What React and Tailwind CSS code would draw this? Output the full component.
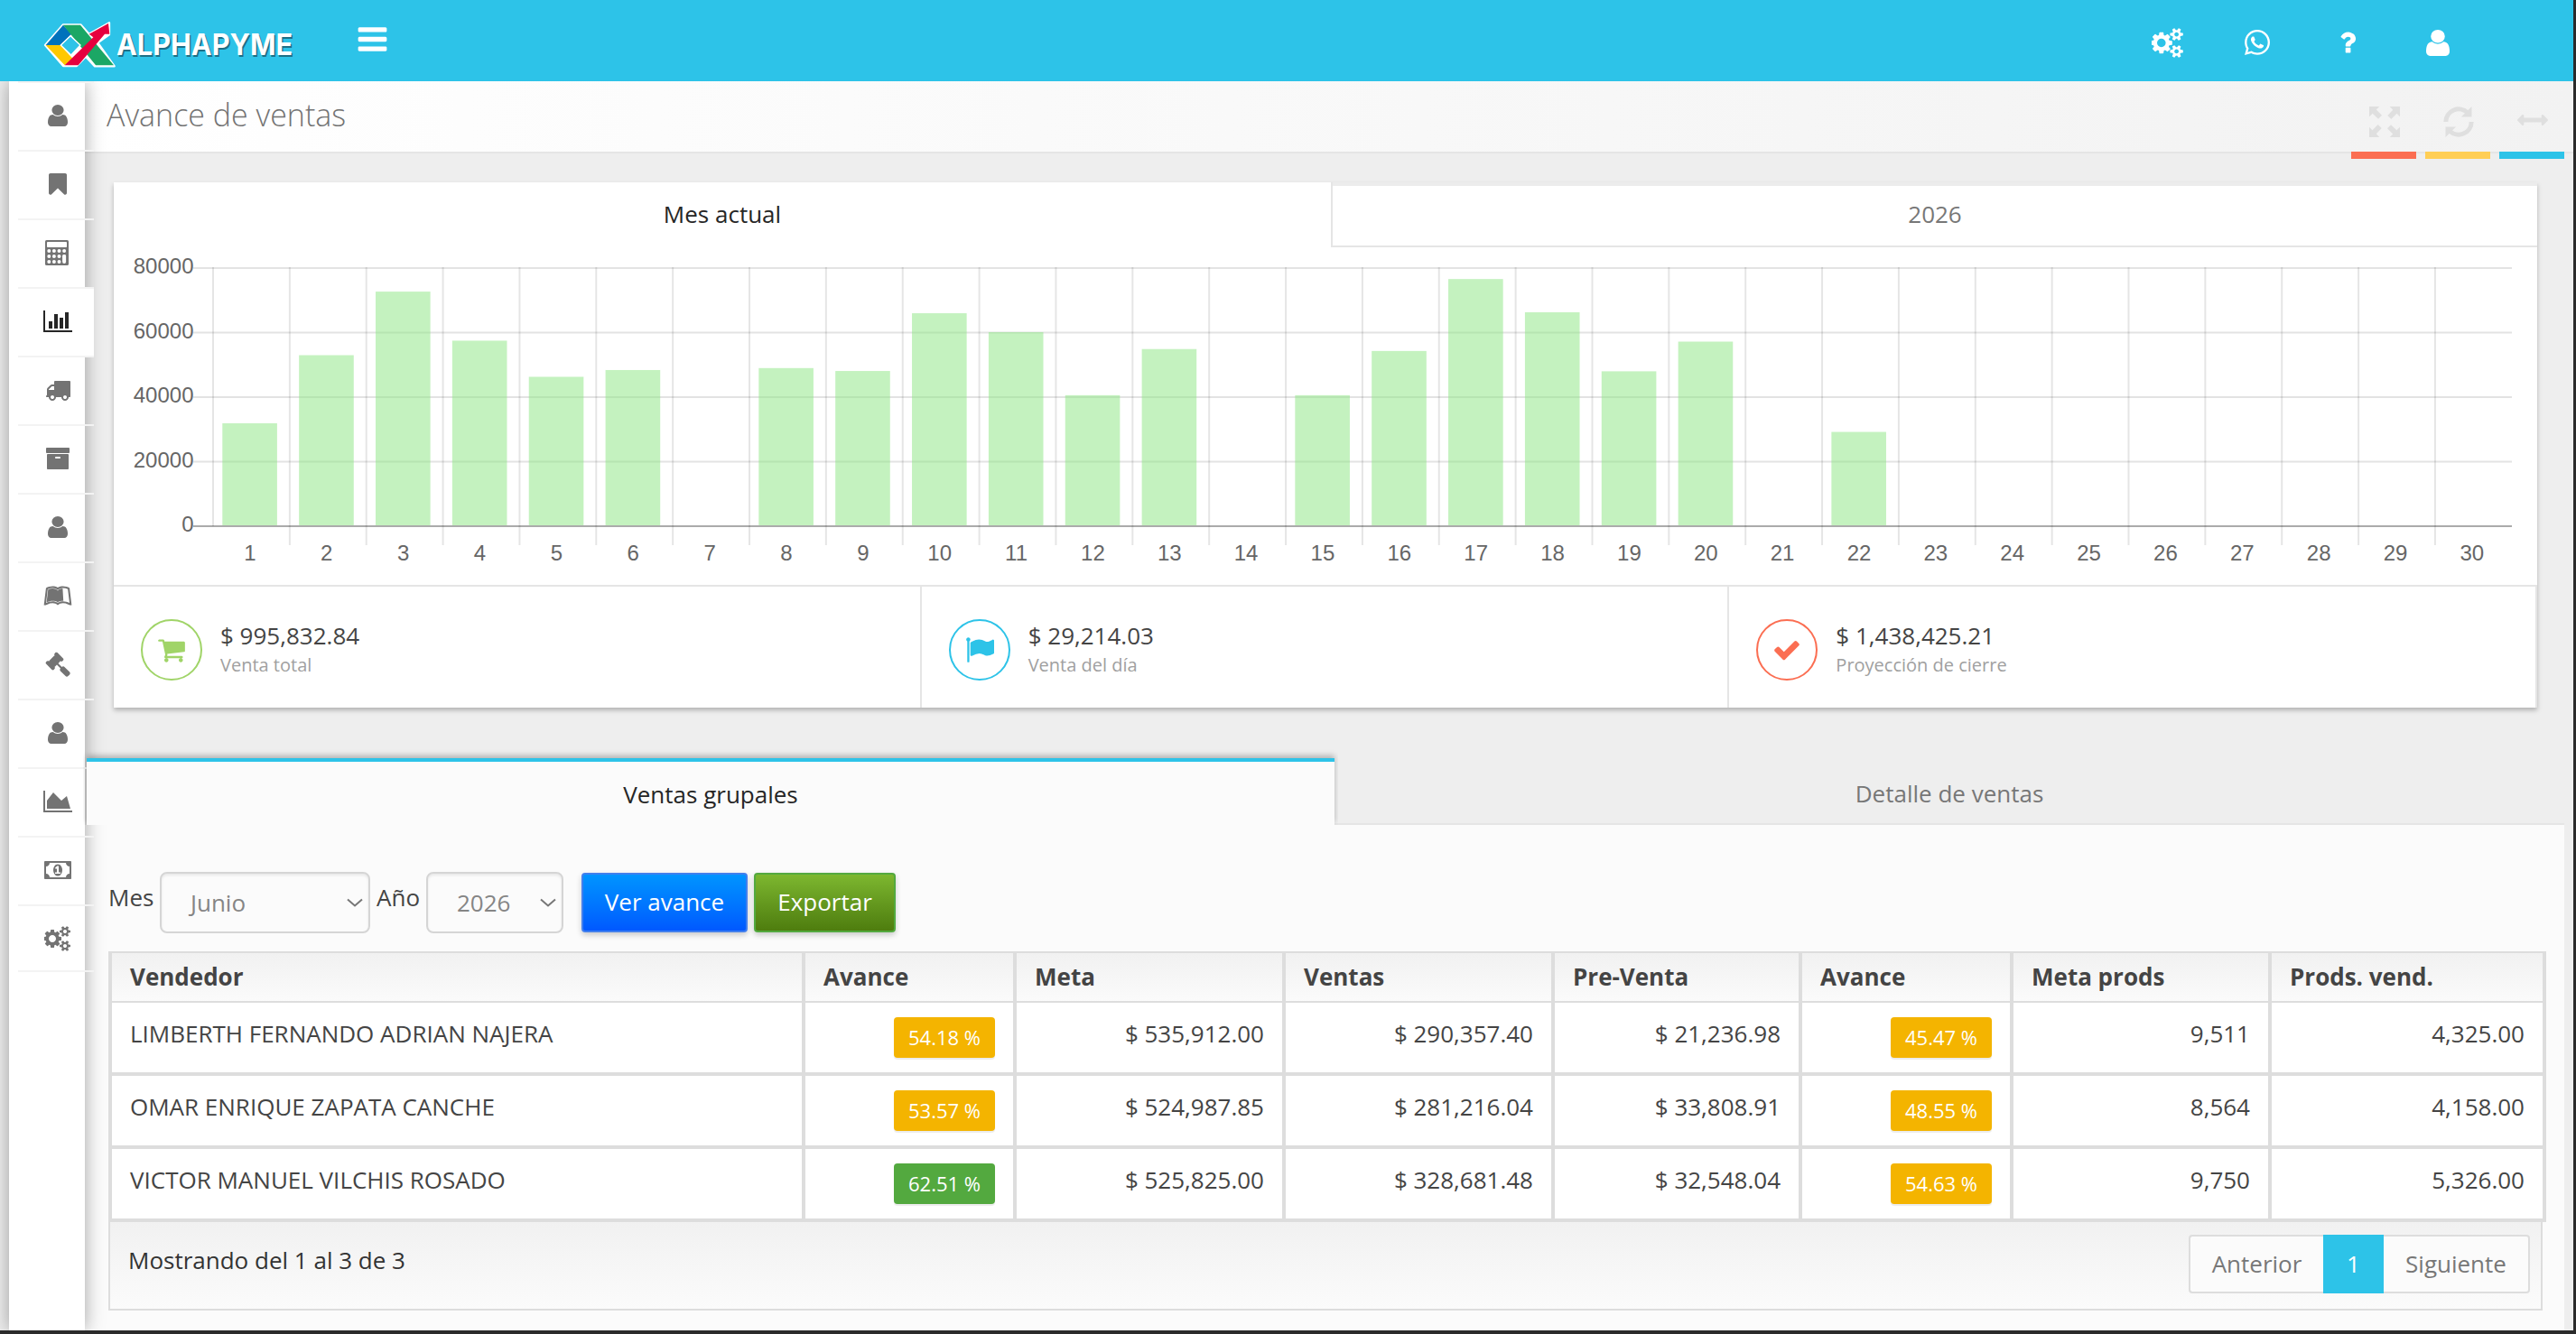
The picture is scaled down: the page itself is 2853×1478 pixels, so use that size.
import { useState } from "react";
import { FaLeanpub, FaWhatsapp } from "react-icons/fa";

const PATHS = {
  bars: "M1664 1344v128q0 26-19 45t-45 19h-1408q-26 0-45-19t-19-45v-128q0-26 19-45t45-19h1408q26 0 45 19t19 45zm0-512v128q0 26-19 45t-45 19h-1408q-26 0-45-19t-19-45v-128q0-26 19-45t45-19h1408q26 0 45 19t19 45zm0-512v128q0 26-19 45t-45 19h-1408q-26 0-45-19t-19-45v-128q0-26 19-45t45-19h1408q26 0 45 19t19 45z",
  user: "M1536 1399q0 109-62.5 187t-150.5 78h-854q-88 0-150.5-78t-62.5-187q0-85 8.5-160.5t31.5-152 58.5-131 94-89 134.5-34.5q131 128 313 128t313-128q76 0 134.5 34.5t94 89 58.5 131 31.5 152 8.5 160.5zm-256-887q0 159-112.5 271.5t-271.5 112.5-271.5-112.5-112.5-271.5 112.5-271.5 271.5-112.5 271.5 112.5 112.5 271.5z",
  bookmark: "M1420 128q23 0 44 9 33 13 52.5 41t19.5 62v1289q0 34-19.5 62t-52.5 41q-19 8-44 8-48 0-83-32l-441-424-441 424q-36 33-83 33-23 0-44-9-33-13-52.5-41t-19.5-62v-1289q0-34 19.5-62t52.5-41q21-9 44-9h1048z",
  chart: "M640 896v512h-256v-512h256zm384-512v1024h-256v-1024h256zm1024 1152v128h-2048v-1536h128v1408h1920zm-640-896v768h-256v-768h256zm384-384v1152h-256v-1152h256z",
  truck: "M640 1408q0-52-38-90t-90-38-90 38-38 90 38 90 90 38 90-38 38-90zm-384-512h384v-256h-158q-13 0-22 9l-195 195q-9 9-9 22v30zm1280 512q0-52-38-90t-90-38-90 38-38 90 38 90 90 38 90-38 38-90zm256-1088v1024q0 15-4 26.5t-13.5 18.5-16.5 11.5-23.5 6-22.5 2-25.5 0-22.5-.5q0 106-75 181t-181 75-181-75-75-181h-384q0 106-75 181t-181 75-181-75-75-181h-64q-3 0-22.5.5t-25.5 0-22.5-2-23.5-6-16.5-11.5-13.5-18.5-4-26.5q0-26 19-45t45-19v-320q0-8-.5-35t0-38 2.5-34.5 6.5-37 14-30.5 22.5-30l198-198q19-19 50.5-32t58.5-13h160v-192q0-26 19-45t45-19h1024q26 0 45 19t19 45z",
  archive: "M1088 832q0-26-19-45t-45-19h-256q-26 0-45 19t-19 45 19 45 45 19h256q26 0 45-19t19-45zm576-192v960q0 26-19 45t-45 19h-1408q-26 0-45-19t-19-45v-960q0-26 19-45t45-19h1408q26 0 45 19t19 45zm64-448v256q0 26-19 45t-45 19h-1536q-26 0-45-19t-19-45v-256q0-26 19-45t45-19h1536q26 0 45 19t19 45z",
  gavel: "M1771 1536q0 53-37 90l-107 108q-39 37-91 37-53 0-90-37l-363-364q-38-36-38-90 0-53 43-96l-256-256-126 126q-14 14-34 14t-34-14q2 2 12.5 12t12.5 13 10 11.5 10 13.5 6 13.5 5.5 16.5 1.5 18q0 38-28 68-3 3-16.5 18t-19 20.5-18.5 16.5-22 15.5-22 9-26 4.5q-40 0-68-28l-408-408q-28-28-28-68 0-13 4.5-26t9-22 15.5-22 16.5-18.5 20.5-19 18-16.5q30-28 68-28 10 0 18 1.5t16.5 5.5 13.5 6 13.5 10 11.5 10 13 12.5 12 12.5q-14-14-14-34t14-34l348-348q14-14 34-14t34 14q-2-2-12.5-12t-12.5-13-10-11.5-10-13.5-6-13.5-5.5-16.5-1.5-18q0-38 28-68 3-3 16.5-18t19-20.5 18.5-16.5 22-15.5 22-9 26-4.5q40 0 68 28l408 408q28 28 28 68 0 13-4.5 26t-9 22-15.5 22-16.5 18.5-20.5 19-18 16.5q-30 28-68 28-10 0-18-1.5t-16.5-5.5-13.5-6-13.5-10-11.5-10-13-12.5-12-12.5q14 14 14 34t-14 34l-126 126 256 256q43-43 96-43 52 0 91 37l363 363q37 39 37 91z",
  area: "M2048 1536v128h-2048v-1536h128v1408h1920zm-384-1024l256 896h-1664v-576l448-576 576 576z",
  money: "M768 1152h384v-96h-128v-448h-114l-148 137 77 80q42-37 55-57h2v288h-128v96zm512-256q0 70-21 142t-59.5 134-101.5 101-138 39-138-39-101.5-101-59.5-134-21-142 21-142 59.5-134 101.5-101 138-39 138 39 101.5 101 59.5 134 21 142zm512 256v-512q-106 0-181-75t-75-181h-1152q0 106-75 181t-181 75v512q106 0 181 75t75 181h1152q0-106 75-181t181-75zm128-832v1152q0 26-19 45t-45 19h-1792q-26 0-45-19t-19-45v-1152q0-26 19-45t45-19h1792q26 0 45 19t19 45z",
  cogs: "M832 896q0-106-75-181t-181-75-181 75-75 181 75 181 181 75 181-75 75-181zm768 512q0-52-38-90t-90-38-90 38-38 90q0 53 37.5 90.5t90.5 37.5 90.5-37.5 37.5-90.5zm0-1024q0-52-38-90t-90-38-90 38-38 90q0 53 37.5 90.5t90.5 37.5 90.5-37.5 37.5-90.5zm-384 421v185q0 10-7 19.5t-16 10.5l-155 24q-11 35-32 76 34 48 90 115 7 11 7 20 0 12-7 19-23 30-82.5 89.5t-78.5 59.5q-11 0-21-7l-115-90q-37 19-77 31-11 108-23 155-7 24-30 24h-186q-11 0-20-7.5t-10-17.5l-23-153q-34-10-75-31l-118 89q-7 7-20 7-11 0-21-8-144-133-144-160 0-9 7-19 10-14 41-53t47-61q-23-44-35-82l-152-24q-10-1-17-9.5t-7-19.5v-185q0-10 7-19.5t16-10.5l155-24q11-35 32-76-34-48-90-115-7-11-7-20 0-12 7-20 22-30 82-89t79-59q11 0 21 7l115 90q34-18 77-32 11-108 23-154 7-24 30-24h186q11 0 20 7.5t10 17.5l23 153q34 10 75 31l118-89q8-7 20-7 11 0 21 8 144 133 144 160 0 8-7 19-12 16-42 54t-45 60q23 48 34 82l152 23q10 2 17 10.5t7 19.5zm640 533v140q0 16-149 31-12 27-30 52 51 113 51 138 0 4-4 7-122 71-124 71-8 0-46-47t-52-68q-20 2-30 2t-30-2q-14 21-52 68t-46 47q-2 0-124-71-4-3-4-7 0-25 51-138-18-25-30-52-149-15-149-31v-140q0-16 149-31 13-29 30-52-51-113-51-138 0-4 4-7 4-2 35-20t59-34 30-16q8 0 46 46.5t52 67.5q20-2 30-2t30 2q51-71 92-112l6-2q4 0 124 70 4 3 4 7 0 25-51 138 17 23 30 52 149 15 149 31zm0-1024v140q0 16-149 31-12 27-30 52 51 113 51 138 0 4-4 7-122 71-124 71-8 0-46-47t-52-68q-20 2-30 2t-30-2q-14 21-52 68t-46 47q-2 0-124-71-4-3-4-7 0-25 51-138-18-25-30-52-149-15-149-31v-140q0-16 149-31 13-29 30-52-51-113-51-138 0-4 4-7 4-2 35-20t59-34 30-16q8 0 46 46.5t52 67.5q20-2 30-2t30 2q51-71 92-112l6-2q4 0 124 70 4 3 4 7 0 25-51 138 17 23 30 52 149 15 149 31z",
  question: "M1088 1256v240q0 16-12 28t-28 12h-240q-16 0-28-12t-12-28v-240q0-16 12-28t28-12h240q16 0 28 12t12 28zm316-600q0 54-15.5 101t-35 76.5-55 59.5-57.5 43.5-61 35.5q-41 23-68.5 65t-27.5 67q0 17-12 32.5t-28 15.5h-240q-15 0-25.5-18.5t-10.5-37.5v-45q0-83 65-156.5t143-108.5q59-27 84-56t25-76q0-42-46.5-74t-107.5-32q-65 0-108 29-35 25-107 115-13 16-31 16-12 0-25-8l-164-125q-13-10-15.5-25t5.5-28q160-266 464-266 80 0 161 31t146 83 106 127.5 41 158.5z",
  arrowsH: "M1792 896q0 26-19 45l-256 256q-19 19-45 19t-45-19-19-45v-128h-1024v128q0 26-19 45t-45 19-45-19l-256-256q-19-19-19-45t19-45l256-256q19-19 45-19t45 19 19 45v128h1024v-128q0-26 19-45t45-19 45 19l256 256q19 19 19 45z",
  cart: "M704 1536q0 52-38 90t-90 38-90-38-38-90 38-90 90-38 90 38 38 90zm896 0q0 52-38 90t-90 38-90-38-38-90 38-90 90-38 90 38 38 90zm128-1088v512q0 24-16.5 42.5t-40.5 21.5l-1044 122q13 60 13 70 0 16-24 64h920q26 0 45 19t19 45-19 45-45 19h-1024q-26 0-45-19t-19-45q0-11 8-31.5t16-36 21.5-40 15.5-29.5l-177-823h-204q-26 0-45-19t-19-45 19-45 45-19h256q16 0 28.5 6.5t19.5 15.5 13 24.5 8 26 5.5 29.5 4.5 26h1201q26 0 45 19t19 45z",
  flag: "M320 256q0 72-64 110v1266q0 13-9.5 22.5t-22.5 9.5h-64q-13 0-22.5-9.5t-9.5-22.5v-1266q-64-38-64-110 0-53 37.5-90.5t90.5-37.5 90.5 37.5 37.5 90.5zm1472 64v763q0 25-12.5 38.5t-39.5 27.5q-215 116-369 116-61 0-123.5-22t-108.5-48-115.5-48-142.5-22q-192 0-464 146-17 9-33 9-26 0-45-19t-19-45v-742q0-32 31-55 21-14 79-43 236-120 421-120 107 0 200 29t219 88q38 19 88 19 54 0 117.5-21t110-47 88-47 54.5-21q26 0 45 19t19 45z",
  check: "M1671 566q0 40-28 68l-724 724-136 136q-28 28-68 28t-68-28l-136-136-362-362q-28-28-28-68t28-68l136-136q28-28 68-28t68 28l294 295 656-657q28-28 68-28t68 28l136 136q28 28 28 68z",
};

function Icon({ name, box = "0 0 1792 1792", className = "h-7 w-7" }) {
  return (
    <svg viewBox={box} preserveAspectRatio="none" fill="currentColor" className={className}>
      <path d={PATHS[name]} />
    </svg>
  );
}

function UserIcon({ className = "h-6 w-[22px]" }) {
  return <Icon name="user" box="256 128 1280 1536" className={className} />;
}

function CalculatorIcon() {
  const cols = [4.6, 10.2, 15.8, 21.4];
  return (
    <svg viewBox="0 0 26 28" className="mr-[2px] h-7 w-[26px]">
      <rect width="26" height="28" rx="1.6" fill="currentColor" />
      <rect x="2" y="2" width="22" height="6" rx="0.8" fill="#fff" />
      {cols.map((x) => (
        <circle key={"a" + x} cx={x - 0.3} cy="12" r="2" fill="#fff" />
      ))}
      {cols.map((x) => (
        <circle key={"b" + x} cx={x - 0.3} cy="18" r="2" fill="#fff" />
      ))}
      {cols.slice(0, 3).map((x) => (
        <circle key={"c" + x} cx={x - 0.3} cy="24" r="2" fill="#fff" />
      ))}
      <rect x="19.1" y="16" width="4" height="10" rx="2" fill="#fff" />
    </svg>
  );
}

const MENU = [
  { id: "usuarios", icon: <UserIcon /> },
  { id: "catalogos", icon: <Icon name="bookmark" /> },
  { id: "caja", icon: <CalculatorIcon /> },
  { id: "ventas", icon: <Icon name="chart" box="0 0 2048 1792" className="h-7 w-8" /> },
  { id: "entregas", icon: <Icon name="truck" /> },
  { id: "almacen", icon: <Icon name="archive" /> },
  { id: "clientes", icon: <UserIcon /> },
  { id: "manuales", icon: <FaLeanpub className="h-7 w-8" /> },
  { id: "legal", icon: <Icon name="gavel" /> },
  { id: "personal", icon: <UserIcon /> },
  { id: "reportes", icon: <Icon name="area" box="0 0 2048 1792" className="h-7 w-8" /> },
  { id: "finanzas", icon: <Icon name="money" box="0 0 1920 1792" className="h-7 w-[30px]" /> },
  { id: "config", icon: <Icon name="cogs" box="0 0 1920 1792" className="h-7 w-[30px]" /> },
];

const VENTAS_DIA = [
  31900, 53000, 72700, 57500, 46300, 48400, 0, 49000, 48100, 66000, 60150, 40600, 54900, 0, 40600,
  54300, 76600, 66300, 48000, 57200, 0, 29214, 0, 0, 0, 0, 0, 0, 0, 0,
];

const COLUMNS = [
  { title: "Vendedor", width: "w-[768px]" },
  { title: "Avance", width: "w-[234px]" },
  { title: "Meta", width: "w-[298px]" },
  { title: "Ventas", width: "w-[298px]" },
  { title: "Pre-Venta", width: "w-[274px]" },
  { title: "Avance", width: "w-[234px]" },
  { title: "Meta prods", width: "w-[286px]" },
  { title: "Prods. vend.", width: "w-[304px]" },
];

const VENDEDORES = [
  { nombre: "LIMBERTH FERNANDO ADRIAN NAJERA", avance: 54.18, meta: "535,912.00", ventas: "290,357.40", preventa: "21,236.98", avanceProds: 45.47, metaProds: "9,511", prods: "4,325.00" },
  { nombre: "OMAR ENRIQUE ZAPATA CANCHE", avance: 53.57, meta: "524,987.85", ventas: "281,216.04", preventa: "33,808.91", avanceProds: 48.55, metaProds: "8,564", prods: "4,158.00" },
  { nombre: "VICTOR MANUEL VILCHIS ROSADO", avance: 62.51, meta: "525,825.00", ventas: "328,681.48", preventa: "32,548.04", avanceProds: 54.63, metaProds: "9,750", prods: "5,326.00" },
];

function Logo() {
  return (
    <svg viewBox="0 0 300 65" className="h-[65px] w-[300px]">
      <g transform="scale(0.33333)">
        <path
          d="M90 37H148L176 68L243 31V70L205 97L260 175H195L165 143L135 174H90L30 105Z"
          fill="#fff"
          stroke="#fff"
          strokeWidth="7"
          strokeLinejoin="round"
        />
        <path d="M90 38L118 68L80 105H32Z" fill="#0072bc" />
        <path d="M32 105H80L124 152L95 172Z" fill="#ffc800" />
        <path d="M90 38H147L258 172H198Z" fill="#1ba765" />
        <path d="M95 172L190 79L176 68L240 33L244 68L228 68L140 172Z" fill="#e6003e" />
        <path d="M114 74L147 105L116 138L82 105Z" fill="#2dc3e8" stroke="#fff" strokeWidth="4" />
      </g>
      <g className="font-['Inter',sans-serif] text-[33px] font-bold">
        <text x="90.5" y="48" textLength="195" lengthAdjust="spacingAndGlyphs" fill="#1d6f86">
          ALPHAPYME
        </text>
        <text x="89" y="46" textLength="195" lengthAdjust="spacingAndGlyphs" fill="#fff">
          ALPHAPYME
        </text>
      </g>
    </svg>
  );
}

function Header() {
  return (
    <header className="relative z-30 flex h-[90px] items-start bg-[#2dc3e8] text-white">
      <div className="ml-10 mt-[15px]">
        <Logo />
      </div>
      <button className="ml-[54px] mt-[25px]">
        <Icon name="bars" className="h-[37px] w-[37px]" />
      </button>
      <div className="ml-auto mr-[100px] flex h-[94px] items-center">
        <div className="flex w-[100px] justify-center pl-[2px]">
          <Icon name="cogs" box="0 0 1920 1792" className="h-[33px] w-9" />
        </div>
        <div className="flex w-[100px] justify-center">
          <FaWhatsapp className="h-8 w-7" />
        </div>
        <div className="flex w-[100px] justify-center">
          <Icon name="question" className="h-8 w-8" />
        </div>
        <div className="flex w-[100px] justify-center">
          <UserIcon className="h-[29px] w-[26px]" />
        </div>
      </div>
    </header>
  );
}

function Sidebar() {
  return (
    <aside className="relative z-10 ml-[10px] w-[84px] shrink-0 bg-white shadow-[0_0_20px_rgba(0,0,0,0.35)]">
      <ul className="-mr-[10px] ml-[10px] border-t-2 border-[#f3f3f3]">
        {MENU.map((item) => (
          <li
            key={item.id}
            className={
              item.id === "ventas"
                ? "flex h-[76px] items-center justify-center border-b-2 border-[#f3f3f3] bg-white pb-[3px] pl-1 text-[#262626]"
                : "flex h-[76px] items-center justify-center border-b-2 border-[#f3f3f3] pb-[3px] pl-1 text-[#737373] last:h-[73px] last:pb-0"
            }
          >
            {item.icon}
          </li>
        ))}
      </ul>
    </aside>
  );
}

function PageHeader() {
  return (
    <div className="flex h-20 shrink-0 border-b-2 border-[#e5e5e5] bg-linear-to-r from-white to-[#f2f2f2]">
      <h1 className="pl-6 pt-[14px] text-[34px] leading-[46px] font-light text-[#737373]">Avance de ventas</h1>
      <div className="ml-auto mr-[10px] flex h-[86px] gap-[10px] text-[#dfdfdf]">
        <button className="flex h-[86px] w-[72px] justify-center border-b-8 border-[#fb6e52] pt-7 pl-[2px]">
          <svg viewBox="0 0 34 34" fill="currentColor" className="h-[34px] w-[34px]">
            <path d="M0 0h11.3l-3.5 3.5 6.2 6.2-4 4-6.3-5.9L0 11.3z" />
            <path d="M34 0v11.3l-3.5-3.5-6.2 6.2-4-4 5.9-6.3L22.7 0z" />
            <path d="M0 34V22.7l3.5 3.5 6.2-6.2 4 4-5.9 6.3 3.5 3.7z" />
            <path d="M34 34H22.7l3.5-3.5-6.2-6.2 4-4 6.3 5.9 3.7-3.5z" />
          </svg>
        </button>
        <button className="flex h-[86px] w-[72px] justify-center border-b-8 border-[#ffce55] pt-7 pl-[2px]">
          <svg viewBox="0 0 34 34" className="h-[34px] w-[34px]">
            <path d="M2.8 17A14.2 14.2 0 0 1 27 7M31.2 17A14.2 14.2 0 0 1 7 27" fill="none" stroke="currentColor" strokeWidth="5" />
            <path d="M31.5 0v11.5H20zM2.5 34V22.5H14z" fill="currentColor" />
          </svg>
        </button>
        <button className="flex h-[86px] w-[72px] justify-center border-b-8 border-[#2dc3e8] pt-[26px] pl-[2px]">
          <Icon name="arrowsH" className="h-[34px] w-[34px]" />
        </button>
      </div>
    </div>
  );
}

// chart area: x 110..2657, y 23..309 inside a 2684x374 canvas
function SalesChart() {
  const left = 110;
  const base = 309;
  const step = 84.86;
  const ticks = [80000, 60000, 40000, 20000, 0];
  const yOf = (v) => base - (v * 286) / 80000;

  return (
    <svg viewBox="0 0 2684 374" className="block h-[374px] w-[2684px]">
      {ticks.map((t) => (
        <g key={t}>
          <line x1="88" x2="2656" y1={yOf(t)} y2={yOf(t)} stroke="#000" strokeOpacity={t === 0 ? 0.33 : 0.11} strokeWidth="2" />
          <text x="88.5" y={yOf(t) + 6} textAnchor="end" fill="#666" className="font-['Liberation_Sans',sans-serif] text-[24px]">
            {t}
          </text>
        </g>
      ))}
      {VENTAS_DIA.map((v, i) => (
        <g key={i}>
          <line x1={left + i * step} x2={left + i * step} y1="22" y2={i === 0 ? base : 330} stroke="#000" strokeOpacity="0.1" strokeWidth="2" />
          {v > 0 && (
            <rect x={left + i * step + 10.3} y={yOf(v)} width="60.6" height={base - 1 - yOf(v)} fill="#8ae57f" fillOpacity="0.5" />
          )}
          <text x={left + (i + 0.5) * step - 1.5} y="347" textAnchor="middle" fill="#666" className="font-['Liberation_Sans',sans-serif] text-[24px]">
            {i + 1}
          </text>
        </g>
      ))}
    </svg>
  );
}

function Stat({ icon, amount, label, color }) {
  return (
    <div className="flex flex-1 border-r-2 border-[#e5e5e5] pl-[30px] pt-9">
      <div className={"flex h-[68px] w-[68px] items-center justify-center rounded-full border-2 " + color}>
        <Icon name={icon} className="h-8 w-8" />
      </div>
      <div className="pl-5">
        <p className="text-[26px] leading-9 text-[#444]">{amount}</p>
        <p className="text-[20px] leading-[30px] text-[#a0a0a0]">{label}</p>
      </div>
    </div>
  );
}

function ChartCard() {
  return (
    <section className="ml-8 mt-8 h-[582px] w-[2684px] shrink-0 bg-white shadow-[0_3px_5px_rgba(0,0,0,0.25)]">
      <div className="flex h-[72px] text-[26px]">
        <div className="flex w-[1348px] items-center justify-center pb-px text-[#262626]">Mes actual</div>
        <div className="flex-1 border-l-2 border-[#e5e5e5]">
          <div className="flex h-[72px] items-center justify-center border-t-4 border-b-2 border-t-[#ececec] border-b-[#e5e5e5] pb-[3px] text-[#777]">2026</div>
        </div>
      </div>
      <SalesChart />
      <div className="flex h-[136px] border-t-2 border-[#e5e5e5]">
        <Stat icon="cart" amount="$ 995,832.84" label="Venta total" color="border-[#a0d468] text-[#a0d468]" />
        <Stat icon="flag" amount="$ 29,214.03" label="Venta del día" color="border-[#2dc3e8] text-[#2dc3e8]" />
        <Stat icon="check" amount="$ 1,438,425.21" label="Proyección de cierre" color="border-[#fb6e52] text-[#fb6e52]" />
      </div>
    </section>
  );
}

function Select({ value, className }) {
  return (
    <div className={"flex h-[68px] items-center justify-between rounded-lg border-2 border-[#d5d5d5] bg-[#fbfbfb] pl-8 pr-[6px] text-[#858585] inset-shadow-[0_2px_3px_rgba(0,0,0,0.08)] " + className}>
      <span>{value}</span>
      <svg viewBox="0 0 18 10" className="h-[10px] w-[18px]">
        <path d="M1 1.5l8 7 8-7" fill="none" stroke="#777" strokeWidth="2" />
      </svg>
    </div>
  );
}

function Badge({ value }) {
  const color = value >= 60 ? "bg-[#53a93f]" : "bg-[#f4b400]";
  return (
    <span className={"ml-auto flex h-[45px] w-28 items-center justify-center rounded pb-px text-[22px] text-white shadow-[0_2px_1px_rgba(0,0,0,0.08)] " + color}>
      {value.toFixed(2)} %
    </span>
  );
}

function SellersTable() {
  const cell = "h-[81px] border-r-4 border-b-4 border-[#dddddd] bg-white px-5 pt-4 align-top text-right leading-9";
  return (
    <table className="w-[2700px] shrink-0 table-fixed border-separate border-spacing-0 border-t-2 border-l-4 border-[#dddddd]">
      <thead>
        <tr className="bg-linear-to-b from-[#f1f1f1] to-[#fbfbfb]">
          {COLUMNS.map((col, i) => (
            <th key={i} className={"h-[55px] border-r-4 border-b-2 border-[#dddddd] px-5 pb-[2px] text-left font-bold leading-9 " + col.width}>
              {col.title}
            </th>
          ))}
        </tr>
      </thead>
      <tbody>
        {VENDEDORES.map((v) => (
          <tr key={v.nombre}>
            <td className="h-[81px] border-r-4 border-b-4 border-[#dddddd] bg-white px-5 pt-4 text-left align-top leading-9">{v.nombre}</td>
            <td className={cell}>
              <Badge value={v.avance} />
            </td>
            <td className={cell}>$ {v.meta}</td>
            <td className={cell}>$ {v.ventas}</td>
            <td className={cell}>$ {v.preventa}</td>
            <td className={cell}>
              <Badge value={v.avanceProds} />
            </td>
            <td className={cell}>{v.metaProds}</td>
            <td className={cell}>{v.prods}</td>
          </tr>
        ))}
      </tbody>
    </table>
  );
}

function TableFooter() {
  return (
    <div className="flex h-[98px] w-[2696px] shrink-0 justify-between border-2 border-t-0 border-[#dddddd] bg-linear-to-b from-[#f1f1f1] to-[#fbfbfb] pl-5 pr-3">
      <p className="pt-6 leading-9 text-[#333]">Mostrando del 1 al 3 de 3</p>
      <div className="mt-[14px] flex h-[65px] w-[378px] rounded text-[#777]">
        <button className="flex w-[149px] items-center justify-center rounded-l border-2 border-r-0 border-[#dddddd] bg-[#fbfbfb]">Anterior</button>
        <button className="flex w-[67px] items-center justify-center bg-[#2dc3e8] text-white">1</button>
        <button className="flex flex-1 items-center justify-center rounded-r border-2 border-l-0 border-[#dddddd] bg-[#fbfbfb]">Siguiente</button>
      </div>
    </div>
  );
}

export default function App() {
  const [tab, setTab] = useState("grupales");

  return (
    <div className="h-screen w-full overflow-hidden bg-[#2b2b2b] pr-[3px] pb-1 font-['Open_Sans','Noto_Sans',sans-serif] text-[26px] text-[#444]">
      <div className="flex h-full flex-col overflow-hidden bg-[#eeeeee]">
        <Header />
        <div className="flex min-h-0 flex-1">
          <Sidebar />
          <main className="flex min-w-0 flex-1 flex-col">
            <PageHeader />
            <ChartCard />

            {/* Tabs */}
            <div className="mr-[10px] mt-14 flex h-[74px] shrink-0 pl-[2px]">
              <button
                onClick={() => setTab("grupales")}
                className="relative z-20 flex w-[1382px] items-center justify-center border-t-4 border-[#2dc3e8] bg-[#fbfbfb] pt-[2px] text-[#262626] shadow-[0_-3px_6px_rgba(0,0,0,0.25)] [clip-path:inset(-10px_-4px_0_-4px)]"
                aria-selected={tab === "grupales"}
              >
                Ventas grupales
              </button>
              <button
                onClick={() => setTab("detalle")}
                className="flex flex-1 items-center justify-center border-b-2 border-[#e5e5e5] pt-[7px] text-[#777]"
                aria-selected={tab === "detalle"}
              >
                Detalle de ventas
              </button>
            </div>

            <section className="mr-[10px] flex min-h-0 flex-1 flex-col bg-[#fbfbfb] pl-[26px] pt-[52px]">
              {/* Filters */}
              <div className="mb-5 flex h-[68px] shrink-0 items-center">
                <label className="w-[57px] pb-3">Mes</label>
                <Select value="Junio" className="w-[233px]" />
                <label className="ml-[7px] w-[55px] pb-3">Año</label>
                <Select value="2026" className="w-[152px]" />
                <button className="ml-5 h-[66px] w-[184px] rounded border-2 border-[#427fed] bg-linear-to-b from-[#0094ff] to-[#0058ff] pb-[2px] text-white shadow-[0_3px_6px_rgba(0,0,0,0.2)]">
                  Ver avance
                </button>
                <button className="ml-[7px] h-[66px] w-[157px] rounded border-2 border-[#53a93f] bg-linear-to-b from-[#7db72f] to-[#4e7d0e] pb-[2px] text-white shadow-[0_3px_6px_rgba(0,0,0,0.2)]">
                  Exportar
                </button>
              </div>

              <SellersTable />
              <TableFooter />
            </section>
          </main>
        </div>
      </div>
    </div>
  );
}
